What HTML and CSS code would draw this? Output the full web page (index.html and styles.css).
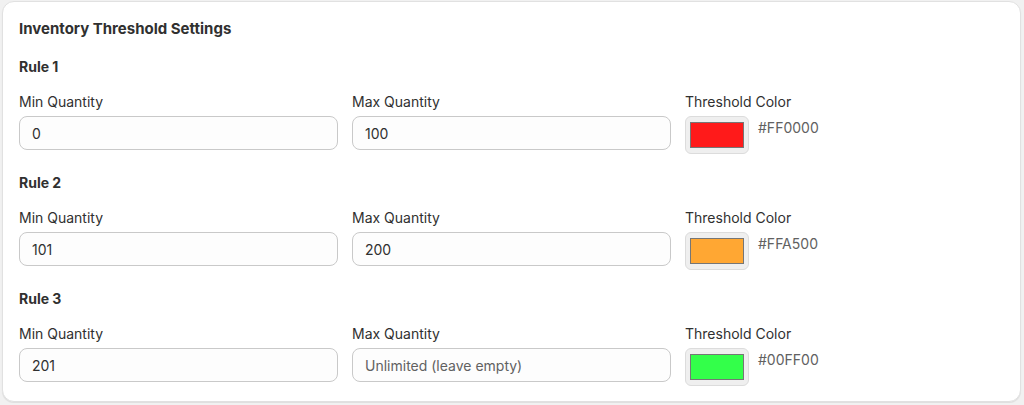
FILE: index.html
```html
<!DOCTYPE html>
<html lang="en">
<head>
    <meta charset="UTF-8">
    <meta name="viewport" content="width=device-width, initial-scale=1.0">
    <title>Inventory Threshold Settings</title>
    <link rel="stylesheet" href="styles.css">
</head>
<body>
    <div class="card">
        <h2 class="title">Inventory Threshold Settings</h2>

        <div class="rule">
            <h3 class="rule-name">Rule 1</h3>
            <div class="fields">
                <div class="field">
                    <label class="label" for="min1">Min Quantity</label>
                    <input class="input" type="text" id="min1" value="0">
                </div>
                <div class="field">
                    <label class="label" for="max1">Max Quantity</label>
                    <input class="input" type="text" id="max1" value="100">
                </div>
                <div class="field">
                    <span class="label">Threshold Color</span>
                    <div class="color-row">
                        <div class="swatch"><div class="swatch-fill" style="background-color: #ff1a1a;"></div></div>
                        <span class="hex">#FF0000</span>
                    </div>
                </div>
            </div>
        </div>

        <div class="rule">
            <h3 class="rule-name">Rule 2</h3>
            <div class="fields">
                <div class="field">
                    <label class="label" for="min2">Min Quantity</label>
                    <input class="input" type="text" id="min2" value="101">
                </div>
                <div class="field">
                    <label class="label" for="max2">Max Quantity</label>
                    <input class="input" type="text" id="max2" value="200">
                </div>
                <div class="field">
                    <span class="label">Threshold Color</span>
                    <div class="color-row">
                        <div class="swatch"><div class="swatch-fill" style="background-color: #ffa733;"></div></div>
                        <span class="hex">#FFA500</span>
                    </div>
                </div>
            </div>
        </div>

        <div class="rule">
            <h3 class="rule-name">Rule 3</h3>
            <div class="fields">
                <div class="field">
                    <label class="label" for="min3">Min Quantity</label>
                    <input class="input" type="text" id="min3" value="201">
                </div>
                <div class="field">
                    <label class="label" for="max3">Max Quantity</label>
                    <input class="input" type="text" id="max3" placeholder="Unlimited (leave empty)">
                </div>
                <div class="field">
                    <span class="label">Threshold Color</span>
                    <div class="color-row">
                        <div class="swatch"><div class="swatch-fill" style="background-color: #33ff4a;"></div></div>
                        <span class="hex">#00FF00</span>
                    </div>
                </div>
            </div>
        </div>
    </div>
</body>
</html>
```

FILE: styles.css
```css
body{
    margin: 0;
    padding: 1px 2px;
    background-color: #f1f1f1;
    font-family: Inter, "Noto Sans", sans-serif;
    font-size: 14px;
    color: #303030;
}
.card{
    width: 1019px;
    height: 401px;
    box-sizing: border-box;
    background-color: #fff;
    border: 1px solid #e1e1e1;
    border-radius: 12px;
    box-shadow: 0 1px 1px rgba(0,0,0,0.08);
    padding: 17px 16px 0 16px;
}
.title{
    margin: 0 0 18px 0;
    font-size: 15px;
    line-height: 20px;
    font-weight: 650;
}
.rule{
    margin-bottom: 19px;
}
.rule-name{
    margin: 0 0 14px 0;
    font-size: 14px;
    line-height: 20px;
    font-weight: 650;
}
.fields{
    display: grid;
    grid-template-columns: 1fr 1fr 1fr;
    gap: 14px;
}
.field{
    display: flex;
    flex-direction: column;
}
.label{
    line-height: 20px;
    padding-top: 1px;
    margin-bottom: 4px;
}
.input{
    height: 34px;
    box-sizing: border-box;
    border: 1px solid #c9c9c9;
    border-radius: 8px;
    background-color: #fdfdfd;
    padding: 0 12px;
    font-family: inherit;
    font-size: 14px;
    color: #303030;
}
.input::placeholder{
    color: #616161;
}
.color-row{
    display: flex;
    align-items: flex-start;
    gap: 9px;
}
.swatch{
    width: 64px;
    height: 38px;
    box-sizing: border-box;
    background-color: #efefef;
    border: 1px solid #dcdcdc;
    border-radius: 6px;
    padding: 5px 4px 5px 4px;
}
.swatch-fill{
    height: 100%;
    box-sizing: border-box;
    border: 1px solid #767676;
}
.hex{
    margin-top: 2px;
    line-height: 20px;
    color: #616161;
}
```
